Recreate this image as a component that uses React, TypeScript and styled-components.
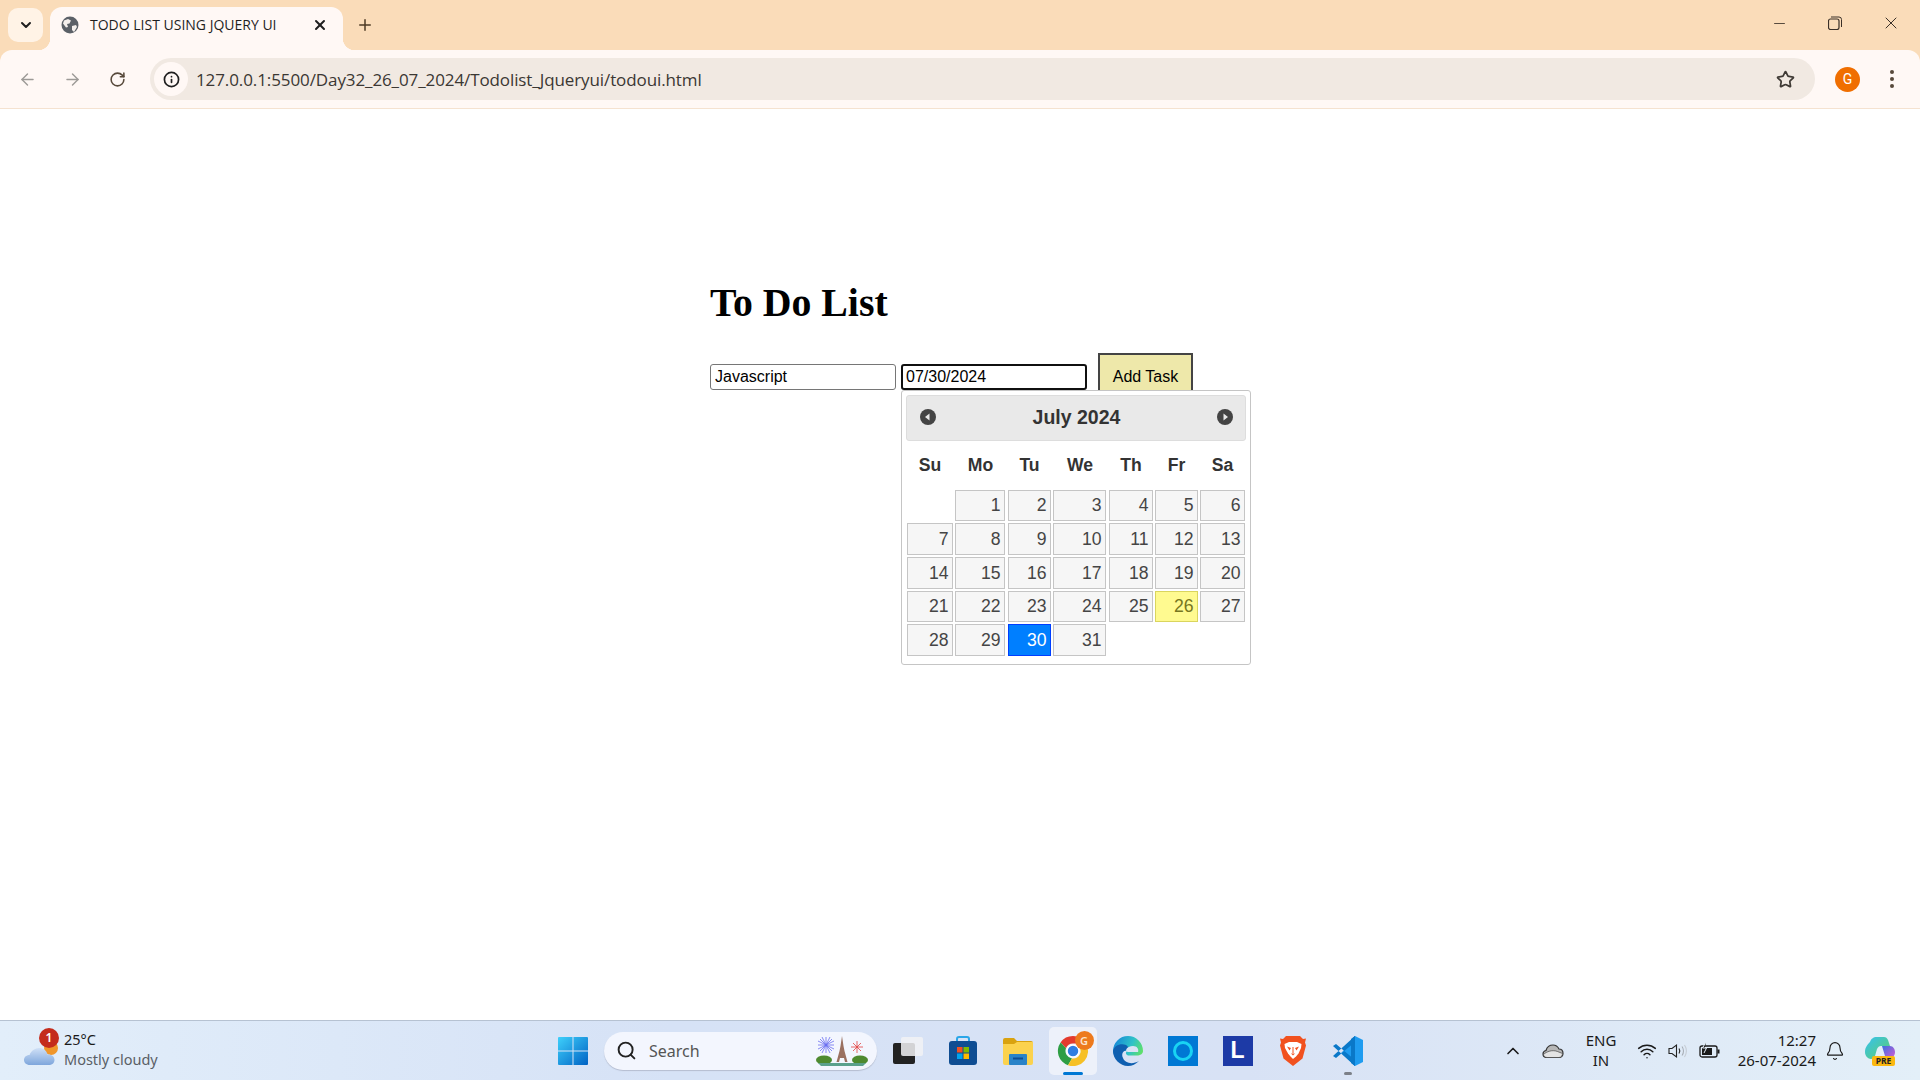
import React from "react";
import styled, { createGlobalStyle } from "styled-components";
import {
  ArrowLeft,
  ArrowRight,
  Bell,
  ChevronDown,
  ChevronUp,
  Info,
  Minus,
  Plus,
  RotateCw,
  Search,
  Star,
  Wifi,
  X,
} from "lucide-react";

const GlobalStyle = createGlobalStyle`
  html, body {
    margin: 0;
    padding: 0;
    background: #ffffff;
    overflow: hidden;
  }
`;

const Screen = styled.div`
  width: 1920px;
  height: 1080px;
  display: flex;
  flex-direction: column;
  background: #fadcb9;
  font-family: "Liberation Sans", Arial, sans-serif;
`;

/* browser chrome */
const TabStrip = styled.div`
  height: 50px;
  flex: none;
  display: flex;
  align-items: flex-end;
  background: #fadcb9;
  padding-left: 8px;
  color: #3a2a1a;
`;

const TabSearch = styled.div`
  width: 35px;
  height: 34px;
  margin-bottom: 8px;
  border-radius: 10px;
  background: #fff3e6;
  display: flex;
  align-items: center;
  justify-content: center;
`;

const Tab = styled.div`
  position: relative;
  width: 293px;
  height: 43px;
  margin-left: 7px;
  padding: 0 15px 8px 11px;
  box-sizing: border-box;
  display: flex;
  align-items: center;
  background: #fff8f5;
  border-radius: 12px 12px 0 0;

  &::before,
  &::after {
    content: "";
    position: absolute;
    bottom: 0;
    width: 12px;
    height: 12px;
  }
  &::before {
    left: -12px;
    background: radial-gradient(circle at 0 0, transparent 12px, #fff8f5 12.5px);
  }
  &::after {
    right: -12px;
    background: radial-gradient(circle at 100% 0, transparent 12px, #fff8f5 12.5px);
  }
`;

const TabTitle = styled.span`
  flex: 1;
  margin-left: 11px;
  font-family: "Open Sans", sans-serif;
  font-size: 14px;
  letter-spacing: 0;
  color: #1f1f1f;
  white-space: nowrap;
`;

const NewTab = styled.div`
  margin: 0 0 9px 6px;
  width: 32px;
  height: 32px;
  display: flex;
  align-items: center;
  justify-content: center;
`;

const WindowControls = styled.div`
  margin-left: auto;
  height: 50px;
  display: flex;
  align-items: center;
  padding: 0 19px 2px 0;
  gap: 36px;
`;

const WindowButton = styled.div`
  width: 20px;
  height: 20px;
  display: flex;
  align-items: center;
  justify-content: center;
`;

const Toolbar = styled.div`
  height: 58px;
  flex: none;
  display: flex;
  align-items: center;
  background: #fff8f5;
  border-bottom: 1px solid #f5e2d0;
  border-radius: 12px 12px 0 0;
  margin-top: 0;
  color: #57493a;
`;

const NavButton = styled.div<{ $muted?: boolean }>`
  width: 45px;
  height: 36px;
  flex: none;
  display: flex;
  align-items: center;
  justify-content: center;
  color: ${(p) => (p.$muted ? "#9d9a97" : "#57493a")};
`;

const NavGroup = styled.div`
  display: flex;
  padding-left: 5px;
`;

const AddressBar = styled.div`
  width: 1665px;
  height: 42px;
  margin-left: 10px;
  flex: none;
  display: flex;
  align-items: center;
  box-sizing: border-box;
  padding: 0 20px 0 4px;
  background: #f1e9e2;
  border-radius: 21px;
`;

const InfoBadge = styled.div`
  width: 34px;
  height: 34px;
  flex: none;
  border-radius: 50%;
  background: #fff8f5;
  display: flex;
  align-items: center;
  justify-content: center;
  color: #1f1f1f;
`;

const UrlText = styled.span`
  flex: 1;
  margin-left: 8px;
  font-family: "Open Sans", sans-serif;
  font-size: 17px;
  letter-spacing: -0.1px;
  color: #3b3733;
  white-space: nowrap;
`;

const Avatar = styled.div`
  width: 25px;
  height: 25px;
  margin-left: 20px;
  flex: none;
  border-radius: 50%;
  background: #f06e00;
  color: #fff;
  font-family: "Roboto", sans-serif;
  font-size: 14px;
  display: flex;
  align-items: center;
  justify-content: center;
`;

const MenuDots = styled.div`
  margin-left: 30px;
  display: flex;
  flex-direction: column;
  gap: 3px;
`;

const Dot = styled.span`
  width: 4px;
  height: 4px;
  border-radius: 50%;
  background: #57493a;
`;

/* the page */
const Page = styled.main`
  flex: 1;
  background: #ffffff;
`;

const Content = styled.div`
  width: 500px;
  margin: 0 auto;
  padding-top: 170px;
`;

const Heading = styled.h1`
  margin: 0 0 26px;
  font-family: "Liberation Serif", "Times New Roman", serif;
  font-size: 39.8px;
  line-height: 48px;
  font-weight: bold;
  color: #000;
`;

const FormRow = styled.div`
  position: relative;
  display: flex;
  align-items: center;
  height: 48px;
`;

const TextInput = styled.input<{ $focused?: boolean }>`
  width: 186px;
  height: 26px;
  box-sizing: border-box;
  margin-right: ${(p) => (p.$focused ? "11px" : "5px")};
  padding: 0 0 0 ${(p) => (p.$focused ? "3px" : "4px")};
  border: ${(p) => (p.$focused ? "2px solid #101010" : "1px solid #767676")};
  border-radius: 3px;
  outline: none;
  background: #fff;
  color: #000;
  font-family: "Liberation Sans", Arial, sans-serif;
  font-size: 16px;
`;

const AddButton = styled.button`
  width: 95px;
  height: 48px;
  box-sizing: border-box;
  border: 2px solid #444;
  background: #eee8aa;
  color: #000;
  font-family: "Liberation Sans", Arial, sans-serif;
  font-size: 16px;
  padding: 0;
`;

const Picker = styled.div`
  position: absolute;
  left: 191px;
  top: 37px;
  width: 350px;
  height: 275px;
  box-sizing: border-box;
  padding: 4px 4px 0 4px;
  background: #fff;
  border: 1px solid #c5c5c5;
  border-radius: 3px;
  color: #333;
`;

const PickerHeader = styled.div`
  height: 46px;
  box-sizing: border-box;
  padding: 0 12px 2px 13px;
  display: flex;
  align-items: center;
  justify-content: space-between;
  background: #e9e9e9;
  border: 1px solid #ddd;
  border-radius: 3px;
`;

const PickerTitle = styled.span`
  font-size: 19.5px;
  font-weight: bold;
  color: #333;
`;

const PickerNav = styled.svg`
  width: 16px;
  height: 16px;
  display: block;
`;

const CalendarTable = styled.table`
  width: 340px;
  table-layout: fixed;
  border-collapse: collapse;
  font-size: 17.6px;
`;

const WeekdayCell = styled.th`
  height: 48px;
  padding: 0;
  font-weight: bold;
  color: #333;
  text-align: center;
`;

const DayCell = styled.td`
  padding: 1px;
  &:nth-child(2) a,
  &:nth-child(4) a {
    margin-right: 1px;
  }
`;

const DayLink = styled.a<{ $state?: "today" | "active"; $height: number }>`
  display: block;
  height: ${(p) => p.$height}px;
  line-height: ${(p) => p.$height - 2}px;
  box-sizing: border-box;
  padding-right: 3.5px;
  text-align: right;
  border: 1px solid
    ${(p) =>
      p.$state === "active" ? "#003eff" : p.$state === "today" ? "#dad55e" : "#c5c5c5"};
  background: ${(p) =>
    p.$state === "active" ? "#007fff" : p.$state === "today" ? "#fffa90" : "#f6f6f6"};
  color: ${(p) =>
    p.$state === "active" ? "#fff" : p.$state === "today" ? "#777620" : "#454545"};
`;

/* windows taskbar */
const Taskbar = styled.footer`
  height: 60px;
  flex: none;
  box-sizing: border-box;
  display: flex;
  align-items: center;
  border-top: 1px solid #b6c2d2;
  background: linear-gradient(90deg, #e2eefa 0%, #d6e2f6 35%, #d8e2f5 65%, #e3eff8 100%);
  font-family: "Noto Sans", sans-serif;
`;

const WeatherWidget = styled.div`
  width: 545px;
  flex: none;
  box-sizing: border-box;
  padding-left: 24px;
  display: flex;
  align-items: center;
`;

const WeatherIconWrap = styled.div`
  position: relative;
  width: 40px;
  height: 40px;
  flex: none;
`;

const NotifyBadge = styled.span`
  position: absolute;
  top: -3px;
  left: 15px;
  width: 20px;
  height: 20px;
  border-radius: 50%;
  background: #c42b1c;
  color: #fff;
  font-size: 12px;
  font-weight: 600;
  line-height: 20px;
  text-align: center;
`;

const WeatherText = styled.div`
  display: flex;
  flex-direction: column;
  padding-bottom: 4px;
  font-size: 14.5px;
  line-height: 20px;
  color: #1a1a1a;
`;

const WeatherSub = styled.span`
  color: #5a5f66;
`;

const IconSlot = styled.div<{ $active?: boolean }>`
  position: relative;
  width: 55px;
  height: 48px;
  flex: none;
  display: flex;
  align-items: center;
  justify-content: center;
  border-radius: 5px;
  background: ${(p) => (p.$active ? "#edf1fa" : "transparent")};
`;

const RunningBar = styled.span<{ $wide?: boolean }>`
  position: absolute;
  bottom: 0;
  left: 50%;
  transform: translateX(-50%);
  width: ${(p) => (p.$wide ? "20px" : "8px")};
  height: 3px;
  border-radius: 2px;
  background: ${(p) => (p.$wide ? "#0078d4" : "#7c8088")};
`;

const ChromeSlot = styled(IconSlot)`
  width: 48px;
  margin: 0 3.5px;
`;

const SearchPill = styled.div`
  width: 273px;
  height: 38px;
  flex: none;
  box-sizing: border-box;
  margin: 0 3px 0 4px;
  padding: 0 9px 0 12px;
  display: flex;
  align-items: center;
  background: #f3f6fe;
  border-radius: 19px;
  box-shadow: 0 1px 1px #b5bdd0;
  color: #222;
`;

const SearchLabel = styled.span`
  flex: 1;
  margin-left: 12px;
  font-size: 16px;
  color: #555;
`;

const SquareLogo = styled.div<{ $bg: string }>`
  width: 30px;
  height: 30px;
  background: ${(p) => p.$bg};
  display: flex;
  align-items: center;
  justify-content: center;
  position: relative;
`;

const AlexaRing = styled.span`
  width: 20px;
  height: 20px;
  box-sizing: border-box;
  border-radius: 50%;
  border: 3px solid #19d3f3;
`;

const LetterL = styled.span`
  font-family: "Liberation Sans", Arial, sans-serif;
  font-weight: bold;
  font-size: 23px;
  color: #fff;
`;

const ChromeBadge = styled.span`
  position: absolute;
  top: 4px;
  right: 3px;
  width: 19px;
  height: 19px;
  border-radius: 50%;
  background: #ed7a1d;
  color: #fbe5d0;
  font-size: 11px;
  font-weight: 600;
  line-height: 19px;
  text-align: center;
`;

const Tray = styled.div`
  margin-left: auto;
  display: flex;
  align-items: center;
  color: #1a1a1a;
`;

const TraySlot = styled.div<{ $width: number }>`
  width: ${(p) => p.$width}px;
  flex: none;
  display: flex;
  align-items: center;
  justify-content: center;
`;

const LangBlock = styled.div`
  width: 50px;
  flex: none;
  padding-bottom: 2px;
  text-align: center;
  font-size: 15px;
  line-height: 20px;
`;

const Clock = styled.div`
  width: 84px;
  flex: none;
  padding-bottom: 2px;
  text-align: right;
  font-size: 15px;
  line-height: 20px;
  white-space: nowrap;
`;

const weekdays = ["Su", "Mo", "Tu", "We", "Th", "Fr", "Sa"];
const columnWidths = [48, 53, 45, 56, 46, 45, 47];
const rowHeights = [31, 32, 32, 31, 32];
const weeks: (number | null)[][] = [
  [null, 1, 2, 3, 4, 5, 6],
  [7, 8, 9, 10, 11, 12, 13],
  [14, 15, 16, 17, 18, 19, 20],
  [21, 22, 23, 24, 25, 26, 27],
  [28, 29, 30, 31, null, null, null],
];

const stateOf = (day: number) => (day === 26 ? "today" : day === 30 ? "active" : undefined);

const GlobeIcon = () => (
  <svg width="18" height="18" viewBox="0 0 18 18">
    <circle cx="9" cy="9" r="8.5" fill="#5b6067" />
    <path d="M3 4.5 7 3l3 1.5-1.5 3L6 8l1 3-2 .5L2 7.5zM11 10l4-1 1 2-3 5-2-2z" fill="#f4efec" />
  </svg>
);

const RestoreIcon = () => (
  <svg width="14" height="14" viewBox="0 0 14 14" fill="none" stroke="#3a3028" strokeWidth="1">
    <rect x="0.5" y="3" width="10.5" height="10.5" rx="2" strokeWidth="1.2" />
    <path d="M3 1h8a2.5 2.5 0 0 1 2.5 2.5V11" />
  </svg>
);

const WeatherIcon = () => (
  <svg width="40" height="40" viewBox="0 0 40 40">
    <defs>
      <linearGradient id="cloudFill" x1="0" y1="0" x2="0" y2="1">
        <stop offset="0" stopColor="#cfe0f6" />
        <stop offset="1" stopColor="#7ea6dc" />
      </linearGradient>
    </defs>
    <circle cx="27" cy="17" r="7" fill="#f0962a" />
    <path
      d="M6 34c-4 0-6-2.500-6-5s2-5 5.500-5C7 20 11 17 15 17c4.500 0 7.500 2.500 8.500 6.500 4-.5 7 2 7 5.500 0 3-2.500 5-6 5z"
      fill="url(#cloudFill)"
    />
  </svg>
);

const WindowsLogo = () => (
  <svg width="30" height="30" viewBox="0 0 30 30">
    <defs>
      <linearGradient id="winFill" x1="0" y1="0" x2="1" y2="1">
        <stop offset="0" stopColor="#3ed0fb" />
        <stop offset="1" stopColor="#0062c4" />
      </linearGradient>
    </defs>
    <path
      d="M1 1h13.500v13.500H0V2a1 1 0 0 1 1-1zM15.500 1H29a1 1 0 0 1 1 1v12.500H15.500zM0 15.500h14.500V29H1a1 1 0 0 1-1-1zM15.500 15.500H30V28a1 1 0 0 1-1 1H15.500z"
      fill="url(#winFill)"
    />
  </svg>
);

const EiffelArt = () => (
  <svg width="52" height="32" viewBox="0 0 52 32">
    <g stroke="#6a6ff0" strokeWidth="0.8">
      <path d="M10 2v16M2 10h16M4 4l12 12M16 4 4 16M6 2l8 16M14 2 6 18M2 6l16 8M18 6 2 14" />
    </g>
    <g stroke="#e2413f" strokeWidth="0.8">
      <path d="M41 6v12M35 12h12M37 8l8 8M45 8l-8 8" />
    </g>
    <path d="M26 1l1.500 10 1 5 3 11h-2.500l-1-4h-4l-1 4h-2.500l3-11 1-5z" fill="#9a7060" />
    <ellipse cx="8" cy="25" rx="8" ry="4.500" fill="#4e8a2f" />
    <ellipse cx="44" cy="25" rx="8" ry="4.500" fill="#4e8a2f" />
    <path d="M2 28h48l-3 3H5z" fill="#5aa08c" />
  </svg>
);

const TaskViewIcon = () => (
  <svg width="30" height="30" viewBox="0 0 30 30">
    <rect x="0" y="7" width="22" height="21" rx="2" fill="#222" />
    <rect x="8" y="1" width="22" height="19" rx="2" fill="#f2f2f4" fillOpacity="0.85" />
  </svg>
);

const StoreIcon = () => (
  <svg width="30" height="30" viewBox="0 0 30 30">
    <path d="M9 6V3a2 2 0 0 1 2-2h8a2 2 0 0 1 2 2v3" fill="none" stroke="#2aa6e8" strokeWidth="2" />
    <rect x="1" y="5" width="28" height="24" rx="3" fill="#0f4d92" />
    <rect x="9" y="11" width="5.500" height="5.500" fill="#f25022" />
    <rect x="15.500" y="11" width="5.500" height="5.500" fill="#7fba00" />
    <rect x="9" y="17.500" width="5.500" height="5.500" fill="#00a4ef" />
    <rect x="15.500" y="17.500" width="5.500" height="5.500" fill="#ffb900" />
  </svg>
);

const FolderIcon = () => (
  <svg width="30" height="28" viewBox="0 0 30 28">
    <path d="M0 3a2 2 0 0 1 2-2h9l3 3h14a2 2 0 0 1 2 2v4H0z" fill="#d9a210" />
    <path d="M0 7h11l3-2h16v21a2 2 0 0 1-2 2H2a2 2 0 0 1-2-2z" fill="#fbd24e" />
    <rect x="6" y="17" width="18" height="11" rx="1" fill="#2a83c8" />
    <rect x="10" y="20.500" width="10" height="2" fill="#0f4d92" />
  </svg>
);

const ChromeLogo = () => (
  <svg width="32" height="32" viewBox="0 0 32 32">
    <path d="M16 1a15 15 0 0 1 13 7.500H16a7.500 7.500 0 0 0-7 4.800L3.600 7.400A15 15 0 0 1 16 1z" fill="#e33b2e" />
    <path d="M3.600 7.400 9 13.300a7.500 7.500 0 0 0 6 10.200L11 30.200A15 15 0 0 1 3.600 7.400z" fill="#2f9e44" />
    <path d="M29 8.500A15 15 0 0 1 11 30.200l4-6.700a7.500 7.500 0 0 0 6.600-12.500z" fill="#f6c026" />
    <circle cx="16" cy="16" r="6" fill="#2f7de1" stroke="#fff" strokeWidth="1.500" />
  </svg>
);

const EdgeLogo = () => (
  <svg width="30" height="30" viewBox="0 0 30 30">
    <defs>
      <linearGradient id="edgeTop" x1="0" y1="0.3" x2="1" y2="0.6">
        <stop offset="0" stopColor="#1587d8" />
        <stop offset="0.6" stopColor="#2fc2c8" />
        <stop offset="1" stopColor="#5fe06a" />
      </linearGradient>
    </defs>
    <path d="M15 0a15 15 0 0 1 15 15c0 3-3 4.500-6 4.500h-8C13 19.500 12 17 14 15c-5-1-9 2-10 7C1 19 0 17 0 15A15 15 0 0 1 15 0z" fill="url(#edgeTop)" />
    <path d="M0 15c1-5 7-8 13-6 2 1 3 3 2 5-5 0-7 4-5 8 2 5 9 7 16 3-3 3-7 5-11 5C7 30 0 23 0 15z" fill="#0f5fb0" />
    <path d="M13 14c1-3 4-4 7-4 4 0 6 3 5 6H15c-1 0-2-1-2-2z" fill="#d9e3f5" />
  </svg>
);

const BraveLogo = () => (
  <svg width="26" height="30" viewBox="0 0 26 30">
    <path d="M6 0h14l3 3 3-.5-1 4 1 3-3.500 13L13 30 3.500 22.500 0 9.500l1-3-1-4L3 3z" fill="#f1511f" />
    <path d="M4.500 8 9 6h8l4.500 2-.5 4-2.500 5.500-2.500 3L13 23l-2.500-2.500-2.500-3L5 12z" fill="#fff" />
    <path d="M7 10.500l4 1.500-1.500 2.500zM19 10.500l-4 1.500 1.500 2.500zM11 17.500h4L13 19.500zM12.500 11h1v6h-1z" fill="#f1511f" />
  </svg>
);

const VsCodeLogo = () => (
  <svg width="30" height="30" viewBox="0 0 30 30">
    <path d="M22 0 30 4v22l-8 4-14-13 3-3z" fill="#1f9cf0" />
    <path d="M22 0v30l-4-3V3z" fill="#0a78c8" />
    <path d="M0 10l3-2 19 16v6zM0 20l3 2L22 6V0z" fill="#0a78c8" />
  </svg>
);

const OneDriveIcon = () => (
  <svg width="22" height="14" viewBox="0 0 22 14">
    <path d="M5 13.500C2 13.500 1 11.500 1 10s1-3 3-3.500C5 3 8 1 11 1s5 2 6 4c2.500 0 4 2 4 4.500 0 2-1.500 4-4 4z" fill="#b7b7b7" stroke="#333" strokeWidth="1.200" />
    <path d="M1.500 10.500c3-3 9-5 14-3l5 2c0 2-1.500 4-3.500 4H5c-2 0-3.500-1.500-3.500-3z" fill="#e4e4e4" stroke="#333" strokeWidth="0.600" />
  </svg>
);

const SpeakerIcon = () => (
  <svg width="20" height="18" viewBox="0 0 20 18" fill="none" stroke="#222" strokeWidth="1.100">
    <path d="M1 6.500h3L8.500 3v12L4 11.500H1z" />
    <path d="M11 6.500c1 1.500 1 3.500 0 5" />
    <path d="M14 4.500c2 2.500 2 6.500 0 9" stroke="#a8aeb6" />
    <path d="M16.500 3c2.500 3.500 2.500 8.500 0 12" stroke="#c6ccd4" />
  </svg>
);

const BatteryIcon = () => (
  <svg width="22" height="18" viewBox="0 0 22 18" fill="none" stroke="#1a1a1a" strokeWidth="1.300">
    <rect x="1" y="4" width="17" height="11" rx="2" />
    <rect x="3" y="6" width="10" height="7" fill="#1a1a1a" stroke="none" />
    <path d="M19.500 7.500v4" strokeWidth="2" />
    <path d="M7 0 3.500 6h4L5 11" stroke="#e8f0f8" strokeWidth="1" fill="#1a1a1a" />
  </svg>
);

const CopilotIcon = () => (
  <svg width="30" height="30" viewBox="0 0 30 30">
    <defs>
      <linearGradient id="copLeft" x1="0" y1="0" x2="1" y2="1">
        <stop offset="0" stopColor="#35c1f1" />
        <stop offset="1" stopColor="#5fcf6a" />
      </linearGradient>
      <linearGradient id="copRight" x1="0" y1="0" x2="1" y2="1">
        <stop offset="0" stopColor="#3a6fe0" />
        <stop offset="1" stopColor="#d85bd2" />
      </linearGradient>
    </defs>
    <path d="M12 1h7c2 0 3 1 4 3l2 6H16c-2 0-3 1-4 3l-2 7c-1 2-2 3-4 3-3 0-6-3-6-7 0-5 3-8 5-10 1-3 3-5 7-5z" fill="url(#copLeft)" />
    <path d="M17 10h8c3 0 5 3 5 6 0 4-3 7-7 7h-6c2 0 3-1 3-3z" fill="url(#copRight)" />
    <rect x="7" y="20" width="23" height="10" rx="2" fill="#fbb80f" />
    <text x="18.500" y="28.200" fontSize="8.500" fontWeight="700" textAnchor="middle" fill="#222" fontFamily="Noto Sans, sans-serif">
      PRE
    </text>
  </svg>
);

const App: React.FC = () => {
  return (
    <Screen>
      <GlobalStyle />
      <TabStrip>
        <TabSearch><ChevronDown size={16} strokeWidth={3} color="#1f1f1f" /></TabSearch>
        <Tab>
          <GlobeIcon />
          <TabTitle>TODO LIST USING JQUERY UI</TabTitle>
          <X size={16} strokeWidth={3} color="#1f1f1f" />
        </Tab>
        <NewTab><Plus size={18} strokeWidth={2} color="#4d3a24" /></NewTab>
        <WindowControls>
          <WindowButton><Minus size={17} strokeWidth={1.2} color="#3a3028" /></WindowButton>
          <WindowButton><RestoreIcon /></WindowButton>
          <WindowButton><X size={20} strokeWidth={1.2} color="#3a3028" /></WindowButton>
        </WindowControls>
      </TabStrip>

      <Toolbar>
        <NavGroup>
          <NavButton $muted><ArrowLeft size={19} strokeWidth={1.8} /></NavButton>
          <NavButton $muted><ArrowRight size={19} strokeWidth={1.8} /></NavButton>
          <NavButton><RotateCw size={17} strokeWidth={2.2} /></NavButton>
        </NavGroup>
        <AddressBar>
          <InfoBadge><Info size={17} strokeWidth={2.4} /></InfoBadge>
          <UrlText>127.0.0.1:5500/Day32_26_07_2024/Todolist_Jqueryui/todoui.html</UrlText>
          <Star size={19} strokeWidth={2.2} color="#3f3a35" />
        </AddressBar>
        <Avatar>G</Avatar>
        <MenuDots><Dot /><Dot /><Dot /></MenuDots>
      </Toolbar>

      <Page>
        <Content>
          <Heading>To Do List</Heading>
          <FormRow>
            <TextInput type="text" defaultValue="Javascript" />
            <TextInput type="text" defaultValue="07/30/2024" $focused />
            <AddButton>Add Task</AddButton>
            <Picker>
              <PickerHeader>
                <PickerNav viewBox="0 0 16 16">
                  <circle cx="8" cy="8" r="8" fill="#444" />
                  <path d="M9.500 4.500v7L5 8z" fill="#e9e9e9" />
                </PickerNav>
                <PickerTitle>July 2024</PickerTitle>
                <PickerNav viewBox="0 0 16 16">
                  <circle cx="8" cy="8" r="8" fill="#444" />
                  <path d="M6.500 4.500v7L11 8z" fill="#e9e9e9" />
                </PickerNav>
              </PickerHeader>
              <CalendarTable>
                <colgroup>
                  {columnWidths.map((w, i) => (
                    <col key={i} width={w} />
                  ))}
                </colgroup>
                <thead>
                  <tr>
                    {weekdays.map((d) => (
                      <WeekdayCell key={d}>{d}</WeekdayCell>
                    ))}
                  </tr>
                </thead>
                <tbody>
                  {weeks.map((week, r) => (
                    <tr key={r}>
                      {week.map((day, c) => (
                        <DayCell key={c}>
                          {day !== null && (
                            <DayLink $height={rowHeights[r]} $state={stateOf(day)}>{day}</DayLink>
                          )}
                        </DayCell>
                      ))}
                    </tr>
                  ))}
                </tbody>
              </CalendarTable>
            </Picker>
          </FormRow>
        </Content>
      </Page>

      <Taskbar>
        <WeatherWidget>
          <WeatherIconWrap>
            <WeatherIcon />
            <NotifyBadge>1</NotifyBadge>
          </WeatherIconWrap>
          <WeatherText>
            <span>25°C</span>
            <WeatherSub>Mostly cloudy</WeatherSub>
          </WeatherText>
        </WeatherWidget>

        <IconSlot><WindowsLogo /></IconSlot>
        <SearchPill>
          <Search size={21} strokeWidth={2.2} />
          <SearchLabel>Search</SearchLabel>
          <EiffelArt />
        </SearchPill>
        <IconSlot><TaskViewIcon /></IconSlot>
        <IconSlot><StoreIcon /></IconSlot>
        <IconSlot><FolderIcon /></IconSlot>
        <ChromeSlot $active>
          <ChromeLogo />
          <ChromeBadge>G</ChromeBadge>
          <RunningBar $wide />
        </ChromeSlot>
        <IconSlot><EdgeLogo /></IconSlot>
        <IconSlot><SquareLogo $bg="#0078d4"><AlexaRing /></SquareLogo></IconSlot>
        <IconSlot><SquareLogo $bg="#1d3aa6"><LetterL>L</LetterL></SquareLogo></IconSlot>
        <IconSlot><BraveLogo /></IconSlot>
        <IconSlot><VsCodeLogo /><RunningBar /></IconSlot>

        <Tray>
          <TraySlot $width={34}><ChevronUp size={20} strokeWidth={2} /></TraySlot>
          <TraySlot $width={46}><OneDriveIcon /></TraySlot>
          <LangBlock>ENG<br />IN</LangBlock>
          <TraySlot $width={42}><Wifi size={20} strokeWidth={1.8} /></TraySlot>
          <TraySlot $width={20}><SpeakerIcon /></TraySlot>
          <TraySlot $width={44}><BatteryIcon /></TraySlot>
          <Clock>12:27<br />26-07-2024</Clock>
          <TraySlot $width={38}><Bell size={20} strokeWidth={1.4} /></TraySlot>
          <TraySlot $width={52}><CopilotIcon /></TraySlot>
          <TraySlot $width={14} />
        </Tray>
      </Taskbar>
    </Screen>
  );
};

export default App;
